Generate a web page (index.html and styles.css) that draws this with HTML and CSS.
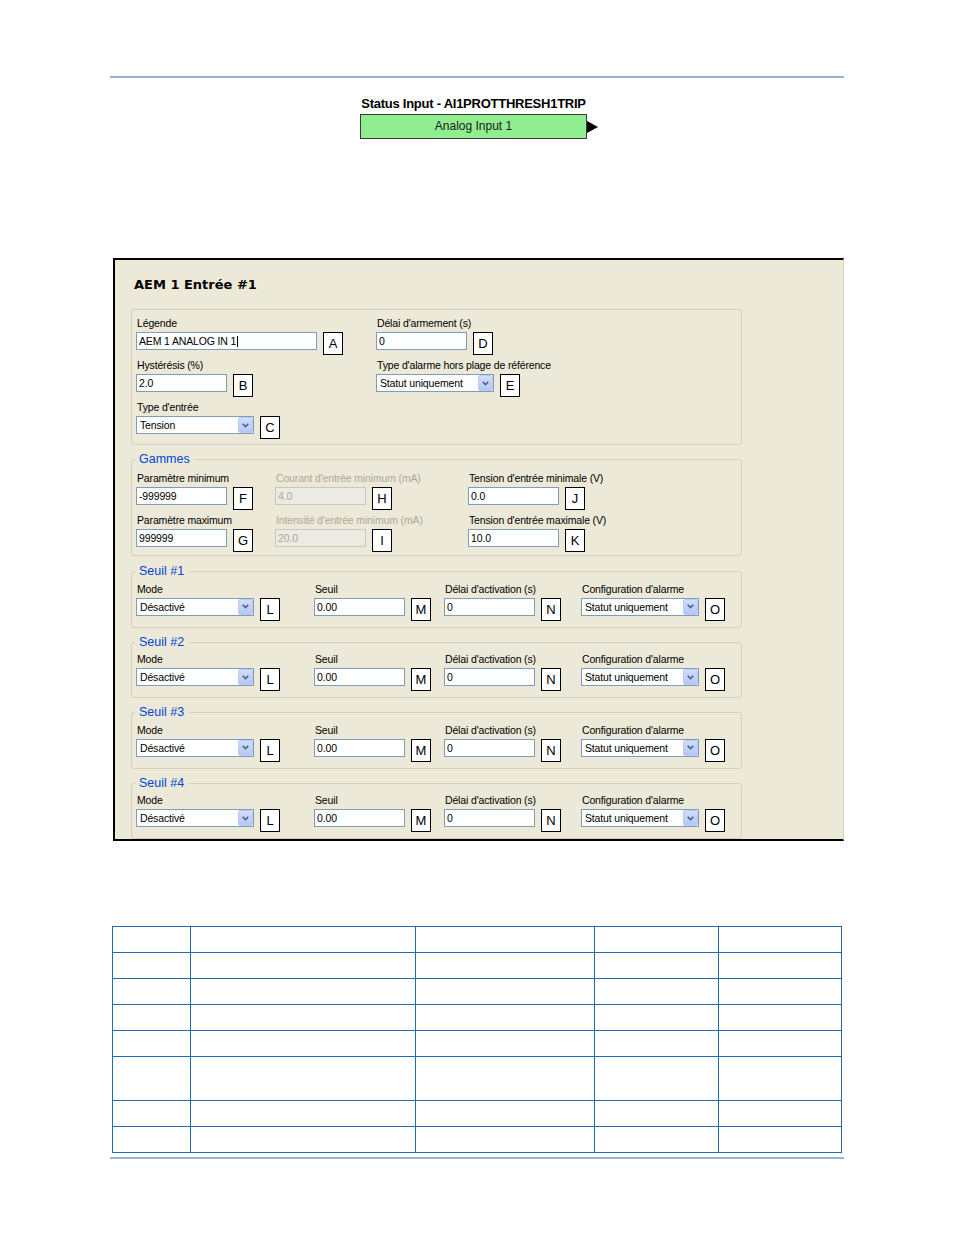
FILE: index.html
```html
<!DOCTYPE html>
<html lang="fr">
<head>
    <meta charset="UTF-8">
    <meta name="viewport" content="width=device-width, initial-scale=1.0">
    <title>AEM 1 Entrée #1</title>
    <link rel="stylesheet" href="styles.css">
</head>
<body>
<div class="page">
    <div class="rule rule-top"></div>

    <div class="status-block">
        <div class="status-title">Status Input - AI1PROTTHRESH1TRIP</div>
        <div class="status-row">
            <div class="status-box">Analog Input 1</div>
            <div class="status-arrow"></div>
        </div>
    </div>

    <div class="panel">
        <div class="panel-title">AEM 1 Entrée #1</div>

        <fieldset class="group group-main">
            <div class="fields cols-main">
                <div class="field">
                    <div class="lbl">Légende</div>
                    <div class="ctl"><div class="tb tb-wide">AEM 1 ANALOG IN 1<span class="caret"></span></div><div class="key">A</div></div>
                </div>
                <div class="field">
                    <div class="lbl">Délai d'armement (s)</div>
                    <div class="ctl"><div class="tb">0</div><div class="key">D</div></div>
                </div>
                <div class="field">
                    <div class="lbl">Hystérésis (%)</div>
                    <div class="ctl"><div class="tb">2.0</div><div class="key">B</div></div>
                </div>
                <div class="field">
                    <div class="lbl">Type d'alarme hors plage de référence</div>
                    <div class="ctl">
                        <div class="combo"><span>Statut uniquement</span><span class="combo-btn"><svg width="7" height="5" viewBox="0 0 7 5"><polyline points="0.7,0.7 3.5,3.6 6.3,0.7" fill="none" stroke="#4d6185" stroke-width="1.6"/></svg></span></div>
                        <div class="key">E</div>
                    </div>
                </div>
                <div class="field">
                    <div class="lbl">Type d'entrée</div>
                    <div class="ctl">
                        <div class="combo"><span>Tension</span><span class="combo-btn"><svg width="7" height="5" viewBox="0 0 7 5"><polyline points="0.7,0.7 3.5,3.6 6.3,0.7" fill="none" stroke="#4d6185" stroke-width="1.6"/></svg></span></div>
                        <div class="key">C</div>
                    </div>
                </div>
            </div>
        </fieldset>

        <fieldset class="group group-ranges">
            <legend>Gammes</legend>
            <div class="fields cols-ranges">
                <div class="field">
                    <div class="lbl">Paramètre minimum</div>
                    <div class="ctl"><div class="tb">-999999</div><div class="key">F</div></div>
                </div>
                <div class="field">
                    <div class="lbl off">Courant d'entrée minimum (mA)</div>
                    <div class="ctl"><div class="tb off">4.0</div><div class="key">H</div></div>
                </div>
                <div class="field">
                    <div class="lbl">Tension d'entrée minimale (V)</div>
                    <div class="ctl"><div class="tb">0.0</div><div class="key">J</div></div>
                </div>
                <div class="field">
                    <div class="lbl">Paramètre maximum</div>
                    <div class="ctl"><div class="tb">999999</div><div class="key">G</div></div>
                </div>
                <div class="field">
                    <div class="lbl off">Intensité d'entrée minimum (mA)</div>
                    <div class="ctl"><div class="tb off">20.0</div><div class="key">I</div></div>
                </div>
                <div class="field">
                    <div class="lbl">Tension d'entrée maximale (V)</div>
                    <div class="ctl"><div class="tb">10.0</div><div class="key">K</div></div>
                </div>
            </div>
        </fieldset>

        <fieldset class="group group-seuil first-seuil">
            <legend>Seuil #1</legend>
            <div class="fields cols-seuil">
                <div class="field">
                    <div class="lbl">Mode</div>
                    <div class="ctl">
                        <div class="combo"><span>Désactivé</span><span class="combo-btn"><svg width="7" height="5" viewBox="0 0 7 5"><polyline points="0.7,0.7 3.5,3.6 6.3,0.7" fill="none" stroke="#4d6185" stroke-width="1.6"/></svg></span></div>
                        <div class="key">L</div>
                    </div>
                </div>
                <div class="field">
                    <div class="lbl">Seuil</div>
                    <div class="ctl"><div class="tb">0.00</div><div class="key">M</div></div>
                </div>
                <div class="field">
                    <div class="lbl">Délai d'activation (s)</div>
                    <div class="ctl"><div class="tb">0</div><div class="key">N</div></div>
                </div>
                <div class="field">
                    <div class="lbl">Configuration d'alarme</div>
                    <div class="ctl">
                        <div class="combo"><span>Statut uniquement</span><span class="combo-btn"><svg width="7" height="5" viewBox="0 0 7 5"><polyline points="0.7,0.7 3.5,3.6 6.3,0.7" fill="none" stroke="#4d6185" stroke-width="1.6"/></svg></span></div>
                        <div class="key">O</div>
                    </div>
                </div>
            </div>
        </fieldset>

        <fieldset class="group group-seuil">
            <legend>Seuil #2</legend>
            <div class="fields cols-seuil">
                <div class="field">
                    <div class="lbl">Mode</div>
                    <div class="ctl">
                        <div class="combo"><span>Désactivé</span><span class="combo-btn"><svg width="7" height="5" viewBox="0 0 7 5"><polyline points="0.7,0.7 3.5,3.6 6.3,0.7" fill="none" stroke="#4d6185" stroke-width="1.6"/></svg></span></div>
                        <div class="key">L</div>
                    </div>
                </div>
                <div class="field">
                    <div class="lbl">Seuil</div>
                    <div class="ctl"><div class="tb">0.00</div><div class="key">M</div></div>
                </div>
                <div class="field">
                    <div class="lbl">Délai d'activation (s)</div>
                    <div class="ctl"><div class="tb">0</div><div class="key">N</div></div>
                </div>
                <div class="field">
                    <div class="lbl">Configuration d'alarme</div>
                    <div class="ctl">
                        <div class="combo"><span>Statut uniquement</span><span class="combo-btn"><svg width="7" height="5" viewBox="0 0 7 5"><polyline points="0.7,0.7 3.5,3.6 6.3,0.7" fill="none" stroke="#4d6185" stroke-width="1.6"/></svg></span></div>
                        <div class="key">O</div>
                    </div>
                </div>
            </div>
        </fieldset>

        <fieldset class="group group-seuil">
            <legend>Seuil #3</legend>
            <div class="fields cols-seuil">
                <div class="field">
                    <div class="lbl">Mode</div>
                    <div class="ctl">
                        <div class="combo"><span>Désactivé</span><span class="combo-btn"><svg width="7" height="5" viewBox="0 0 7 5"><polyline points="0.7,0.7 3.5,3.6 6.3,0.7" fill="none" stroke="#4d6185" stroke-width="1.6"/></svg></span></div>
                        <div class="key">L</div>
                    </div>
                </div>
                <div class="field">
                    <div class="lbl">Seuil</div>
                    <div class="ctl"><div class="tb">0.00</div><div class="key">M</div></div>
                </div>
                <div class="field">
                    <div class="lbl">Délai d'activation (s)</div>
                    <div class="ctl"><div class="tb">0</div><div class="key">N</div></div>
                </div>
                <div class="field">
                    <div class="lbl">Configuration d'alarme</div>
                    <div class="ctl">
                        <div class="combo"><span>Statut uniquement</span><span class="combo-btn"><svg width="7" height="5" viewBox="0 0 7 5"><polyline points="0.7,0.7 3.5,3.6 6.3,0.7" fill="none" stroke="#4d6185" stroke-width="1.6"/></svg></span></div>
                        <div class="key">O</div>
                    </div>
                </div>
            </div>
        </fieldset>

        <fieldset class="group group-seuil">
            <legend>Seuil #4</legend>
            <div class="fields cols-seuil">
                <div class="field">
                    <div class="lbl">Mode</div>
                    <div class="ctl">
                        <div class="combo"><span>Désactivé</span><span class="combo-btn"><svg width="7" height="5" viewBox="0 0 7 5"><polyline points="0.7,0.7 3.5,3.6 6.3,0.7" fill="none" stroke="#4d6185" stroke-width="1.6"/></svg></span></div>
                        <div class="key">L</div>
                    </div>
                </div>
                <div class="field">
                    <div class="lbl">Seuil</div>
                    <div class="ctl"><div class="tb">0.00</div><div class="key">M</div></div>
                </div>
                <div class="field">
                    <div class="lbl">Délai d'activation (s)</div>
                    <div class="ctl"><div class="tb">0</div><div class="key">N</div></div>
                </div>
                <div class="field">
                    <div class="lbl">Configuration d'alarme</div>
                    <div class="ctl">
                        <div class="combo"><span>Statut uniquement</span><span class="combo-btn"><svg width="7" height="5" viewBox="0 0 7 5"><polyline points="0.7,0.7 3.5,3.6 6.3,0.7" fill="none" stroke="#4d6185" stroke-width="1.6"/></svg></span></div>
                        <div class="key">O</div>
                    </div>
                </div>
            </div>
        </fieldset>
    </div>

    <table class="ref-table">
        <colgroup>
            <col class="c1"><col class="c2"><col class="c3"><col class="c4"><col class="c5">
        </colgroup>
        <tr><td></td><td></td><td></td><td></td><td></td></tr>
        <tr><td></td><td></td><td></td><td></td><td></td></tr>
        <tr><td></td><td></td><td></td><td></td><td></td></tr>
        <tr><td></td><td></td><td></td><td></td><td></td></tr>
        <tr><td></td><td></td><td></td><td></td><td></td></tr>
        <tr class="tall"><td></td><td></td><td></td><td></td><td></td></tr>
        <tr><td></td><td></td><td></td><td></td><td></td></tr>
        <tr><td></td><td></td><td></td><td></td><td></td></tr>
    </table>

    <div class="rule rule-bottom"></div>
</div>
</body>
</html>
```

FILE: styles.css
```css
body {
    margin: 0;
    background: #fff;
    color: #000;
    font-family: "Liberation Sans", Arial, sans-serif;
}
.page {
    width: 734px;
    margin: 0 auto;
}
.rule {
    height: 2px;
    background: #95b3d7;
}
.rule-top { margin-top: 76px; }
.rule-bottom { margin-top: 4px; }

/* status input block */
.status-block {
    margin: 18px 0 0 250px;
    width: 239px;
}
.status-title {
    width: 227px;
    font-size: 13px;
    line-height: 15px;
    font-weight: bold;
    letter-spacing: -0.25px;
    text-align: center;
    white-space: nowrap;
}
.status-row {
    display: flex;
    align-items: center;
    margin-top: 3px;
}
.status-box {
    width: 227px;
    height: 25px;
    box-sizing: border-box;
    border: 1px solid #3a3a3a;
    background: #90ee90;
    color: #1a1a1a;
    font-size: 12px;
    line-height: 23px;
    text-align: center;
}
.status-arrow {
    width: 0;
    height: 0;
    border-top: 6px solid transparent;
    border-bottom: 6px solid transparent;
    border-left: 11px solid #000;
}

/* settings panel */
.panel {
    margin: 119px 0 0 3px;
    padding: 17px 0 0 16px;
    background: #ece9d8;
    border: 2px solid #000;
    border-right: 1px solid #d6d2c2;
}
.panel-title {
    margin: 0 0 16px 3px;
    font-family: "DejaVu Sans", sans-serif;
    font-size: 13px;
    line-height: 16px;
    font-weight: bold;
}
.group {
    width: 611px;
    min-width: 0;
    box-sizing: border-box;
    margin: 0;
    padding: 6px 4px 5px;
    border: 1px solid #d0d0bf;
    border-radius: 3px;
}
.group legend {
    margin-left: -1px;
    padding: 0 5px 0 4px;
    color: #0046d5;
    font-size: 12.5px;
    line-height: 15px;
}
.group-ranges {
    margin-top: 7px;
    padding: 4px 4px 3px;
}
.group-seuil {
    margin-top: 7px;
    padding: 2.5px 4px 6px;
}
.first-seuil { margin-top: 8px; }

.fields {
    display: grid;
    row-gap: 3px;
}
.cols-main { grid-template-columns: 240px 1fr; }
.cols-ranges { grid-template-columns: 139px 193px 1fr; }
.cols-seuil { grid-template-columns: 178px 130px 137px 1fr; }

.lbl {
    padding-left: 1px;
    font-size: 10.5px;
    line-height: 14px;
    letter-spacing: -0.15px;
    white-space: nowrap;
}
.lbl.off { color: #aca899; }
.ctl {
    display: flex;
    align-items: flex-start;
    gap: 6px;
    margin-top: 2px;
}

/* text box */
.tb {
    width: 91px;
    height: 18px;
    box-sizing: border-box;
    padding: 0 2px;
    background: #fff;
    border: 1px solid #7f9db9;
    font-size: 10.5px;
    line-height: 16px;
    letter-spacing: -0.15px;
    white-space: nowrap;
    overflow: hidden;
}
.tb-wide { width: 181px; }
.tb.off {
    background: #ebebe4;
    border-color: #c9c7ba;
    color: #aca899;
}
.caret {
    display: inline-block;
    width: 1px;
    height: 11px;
    margin-left: 1px;
    background: #000;
    vertical-align: -2px;
}

/* combo box */
.combo {
    width: 118px;
    height: 18px;
    box-sizing: border-box;
    display: flex;
    justify-content: space-between;
    padding-left: 3px;
    background: #fff;
    border: 1px solid #7f9db9;
    font-size: 10.5px;
    line-height: 16px;
    letter-spacing: -0.15px;
    white-space: nowrap;
}
.combo-btn {
    width: 15px;
    box-sizing: border-box;
    display: flex;
    align-items: center;
    justify-content: center;
    background: linear-gradient(#d2ddfb, #b3c7f5);
    border: 1px solid #bccbef;
    border-radius: 2px;
}

/* letter tag */
.key {
    width: 20px;
    height: 23px;
    box-sizing: border-box;
    background: #fff;
    border: 1px solid #000;
    font-size: 13px;
    line-height: 21px;
    text-align: center;
}

/* empty table */
.ref-table {
    width: 730px;
    margin: 85px 0 0 2px;
    border-collapse: collapse;
    table-layout: fixed;
}
.ref-table td {
    padding: 0;
    border: 1px solid #1f6cb5;
}
.ref-table tr { height: 26px; }
.ref-table tr.tall { height: 44px; }
.c1 { width: 78px; }
.c2 { width: 225px; }
.c3 { width: 179px; }
.c4 { width: 124px; }
.c5 { width: 123px; }
```
